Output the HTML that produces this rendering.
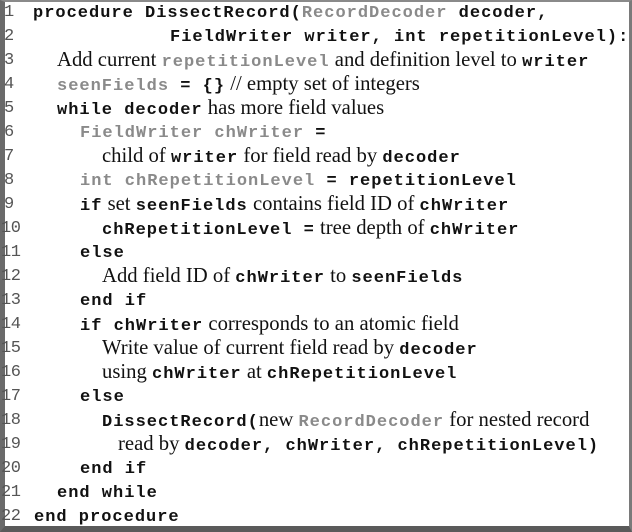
<!DOCTYPE html>
<html><head><meta charset="utf-8"><style>
html,body{margin:0;padding:0;}
body{width:632px;height:532px;position:relative;overflow:hidden;background:#fff;}
.frame{position:absolute;left:0;top:0;width:632px;height:532px;box-sizing:border-box;border-left:5px solid #6a6a6a;border-bottom:6px solid #5a5a5a;border-right:3px solid #7a7a7a;border-top:2px solid #8a8a8a;}
.l{position:absolute;white-space:pre;height:24px;line-height:24px;color:#111;}
.n{position:absolute;left:4px;font:17px "Liberation Mono",monospace;color:#555;line-height:24px;}
.n2{left:1px;letter-spacing:-0.5px;}
b,.g{font:bold 17px "Liberation Mono",monospace;letter-spacing:1.0px;}
.g{color:#8a8a8a;}
.s{font:20.7px "Liberation Serif",serif;}
</style></head><body>
<div class="frame"></div>
<div class="n" style="top:1px">1</div><div class="l" style="top:1px;left:33px"><b>procedure DissectRecord(</b><span class="g">RecordDecoder</span><b> decoder,</b></div>
<div class="n" style="top:25px">2</div><div class="l" style="top:25px;left:170px"><b>FieldWriter writer, int repetitionLevel):</b></div>
<div class="n" style="top:49px">3</div><div class="l" style="top:49px;left:57px"><span class="s">Add current </span><span class="g">repetitionLevel</span><span class="s"> and definition level to </span><b>writer</b></div>
<div class="n" style="top:73px">4</div><div class="l" style="top:73px;left:57px"><span class="g">seenFields</span><b> = {}</b><span class="s"> // empty set of integers</span></div>
<div class="n" style="top:97px">5</div><div class="l" style="top:97px;left:57px"><b>while decoder</b><span class="s"> has more field values</span></div>
<div class="n" style="top:121px">6</div><div class="l" style="top:121px;left:80px"><span class="g">FieldWriter chWriter</span><b> =</b></div>
<div class="n" style="top:145px">7</div><div class="l" style="top:145px;left:102px"><span class="s">child of </span><b>writer</b><span class="s"> for field read by </span><b>decoder</b></div>
<div class="n" style="top:169px">8</div><div class="l" style="top:169px;left:80px"><span class="g">int chRepetitionLevel</span><b> = repetitionLevel</b></div>
<div class="n" style="top:193px">9</div><div class="l" style="top:193px;left:80px"><b>if</b><span class="s"> set </span><b>seenFields</b><span class="s"> contains field ID of </span><b>chWriter</b></div>
<div class="n n2" style="top:217px">10</div><div class="l" style="top:217px;left:102px"><b>chRepetitionLevel =</b><span class="s"> tree depth of </span><b>chWriter</b></div>
<div class="n n2" style="top:241px">11</div><div class="l" style="top:241px;left:80px"><b>else</b></div>
<div class="n n2" style="top:265px">12</div><div class="l" style="top:265px;left:102px"><span class="s">Add field ID of </span><b>chWriter</b><span class="s"> to </span><b>seenFields</b></div>
<div class="n n2" style="top:289px">13</div><div class="l" style="top:289px;left:80px"><b>end if</b></div>
<div class="n n2" style="top:313px">14</div><div class="l" style="top:313px;left:80px"><b>if chWriter</b><span class="s"> corresponds to an atomic field</span></div>
<div class="n n2" style="top:337px">15</div><div class="l" style="top:337px;left:102px"><span class="s">Write value of current field read by </span><b>decoder</b></div>
<div class="n n2" style="top:361px">16</div><div class="l" style="top:361px;left:102px"><span class="s">using </span><b>chWriter</b><span class="s"> at </span><b>chRepetitionLevel</b></div>
<div class="n n2" style="top:385px">17</div><div class="l" style="top:385px;left:80px"><b>else</b></div>
<div class="n n2" style="top:409px">18</div><div class="l" style="top:409px;left:102px"><b>DissectRecord(</b><span class="s">new </span><span class="g">RecordDecoder</span><span class="s"> for nested record</span></div>
<div class="n n2" style="top:433px">19</div><div class="l" style="top:433px;left:118px"><span class="s">read by </span><b>decoder, chWriter, chRepetitionLevel)</b></div>
<div class="n n2" style="top:457px">20</div><div class="l" style="top:457px;left:80px"><b>end if</b></div>
<div class="n n2" style="top:481px">21</div><div class="l" style="top:481px;left:57px"><b>end while</b></div>
<div class="n n2" style="top:505px">22</div><div class="l" style="top:505px;left:34px"><b>end procedure</b></div>
</body></html>
